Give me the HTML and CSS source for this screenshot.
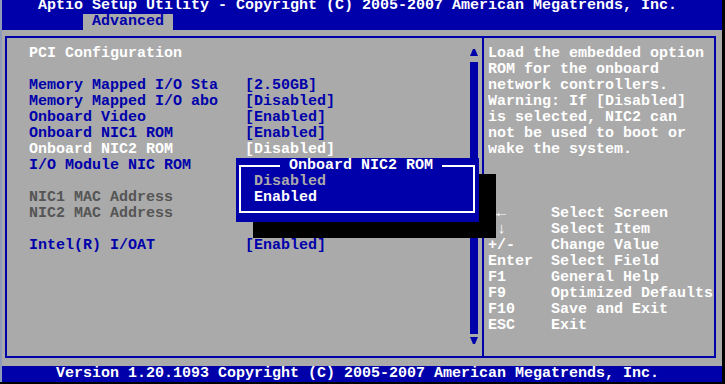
FILE: index.html
```html
<!DOCTYPE html>
<html lang="en">
<head>
<meta charset="UTF-8">
<title>Aptio Setup Utility</title>
<link rel="stylesheet" href="styles.css">
</head>
<body>

<div class="edge"></div>

<div class="screen">
  <div class="titlebar">Aptio Setup Utility - Copyright (C) 2005-2007 American Megatrends, Inc.</div>
  <div class="tabs"><span class="tab">Advanced</span></div>

  <div class="main">
    <div class="frame">
      <div class="left">
        <div class="items">
          <div class="row head">PCI Configuration</div>
          <div class="row"></div>
          <div class="row"><span class="label">Memory Mapped I/O Sta</span>[2.50GB]</div>
          <div class="row"><span class="label">Memory Mapped I/O abo</span>[Disabled]</div>
          <div class="row"><span class="label">Onboard Video</span>[Enabled]</div>
          <div class="row"><span class="label">Onboard NIC1 ROM</span>[Enabled]</div>
          <div class="row sel"><span class="label">Onboard NIC2 ROM</span>[Disabled]</div>
          <div class="row"><span class="label">I/O Module NIC ROM</span>[Enabled]</div>
          <div class="row"></div>
          <div class="row dim">NIC1 MAC Address</div>
          <div class="row dim">NIC2 MAC Address</div>
          <div class="row"></div>
          <div class="row"><span class="label">Intel(R) I/OAT</span>[Enabled]</div>
        </div>
        <div class="scrollbar">
          <div class="arrow">
            <svg width="8" height="16" viewBox="0 0 8 16"><polygon points="3,3 5,3 8,10 0,10" fill="#0000aa"/></svg>
          </div>
          <div class="track"></div>
          <div class="arrow">
            <svg width="8" height="16" viewBox="0 0 8 16"><polygon points="0,3 8,3 5,10 3,10" fill="#0000aa"/></svg>
          </div>
        </div>
      </div>

      <div class="help">
        <div class="line">Load the embedded option</div>
        <div class="line">ROM for the onboard</div>
        <div class="line">network controllers.</div>
        <div class="line">Warning: If [Disabled]</div>
        <div class="line">is selected, NIC2 can</div>
        <div class="line">not be used to boot or</div>
        <div class="line">wake the system.</div>
        <div class="gap"></div>
        <div class="line"><span class="key">→←</span>Select Screen</div>
        <div class="line"><span class="key">↑↓</span>Select Item</div>
        <div class="line"><span class="key">+/-</span>Change Value</div>
        <div class="line"><span class="key">Enter</span>Select Field</div>
        <div class="line"><span class="key">F1</span>General Help</div>
        <div class="line"><span class="key">F9</span>Optimized Defaults</div>
        <div class="line"><span class="key">F10</span>Save and Exit</div>
        <div class="line"><span class="key">ESC</span>Exit</div>
      </div>
    </div>
  </div>

  <div class="statusbar">Version 1.20.1093 Copyright (C) 2005-2007 American Megatrends, Inc.</div>
</div>

<div class="popup">
  <fieldset>
    <legend>Onboard NIC2 ROM</legend>
    <div class="opt off">Disabled</div>
    <div class="opt">Enabled</div>
  </fieldset>
</div>

</body>
</html>
```

FILE: styles.css
```css
body { margin: 0; width: 725px; height: 384px; overflow: hidden; background: #000; display: flex; align-items: flex-start; position: relative; font: bold 15px/16px "Liberation Mono", monospace; }
.edge { width: 2px; height: 382px; background: #8f9ab8; }
.screen { width: 720px; margin-top: -2px; display: flex; flex-direction: column; }

.titlebar { height: 16px; background: #0000aa; color: #fff; padding-left: 36px; white-space: pre; }
.tabs { height: 16px; background: #0000aa; padding-left: 81px; }
.tab { display: block; width: 81px; padding-left: 9px; background: #aaa; color: #0000aa; }

.main { height: 336px; background: #aaa; display: flex; flex-direction: column; }
.frame { flex: 1; margin: 6px 6px 8px 3px; border: 2px solid #0000aa; display: flex; }
.left { width: 475px; border-right: 2px solid #0000aa; display: flex; }
.items { flex: 1; padding: 8px 0 0 22px; color: #0000aa; }
.row { height: 16px; white-space: pre; }
.label { display: inline-block; width: 216px; }
.head, .sel { color: #fff; }
.dim { color: #555; }

.scrollbar { width: 8px; margin-right: 4px; padding-top: 8px; }
.arrow { height: 16px; }
.arrow svg { display: block; }
.track { height: 272px; background: #0000aa; }

.help { flex: 1; padding: 8px 0 0 4px; color: #fff; }
.line { height: 16px; white-space: pre; }
.gap { height: 48px; }
.key { display: inline-block; width: 63px; }

.statusbar { height: 16px; background: #0000aa; color: #fff; padding-left: 54px; white-space: pre; }

.popup { position: absolute; left: 236px; top: 158px; width: 243px; background: #0000aa; box-shadow: 17px 16px 0 #000; }
.popup fieldset { margin: 0 4px 9px 3px; padding: 0 0 5px 0; border: 2px solid #fff; min-width: 0; }
.popup legend { margin-left: 39px; padding: 0 9px; color: #fff; line-height: 16px; }
.opt { height: 16px; padding-left: 13px; color: #fff; }
.opt.off { color: #aaa; }
```
